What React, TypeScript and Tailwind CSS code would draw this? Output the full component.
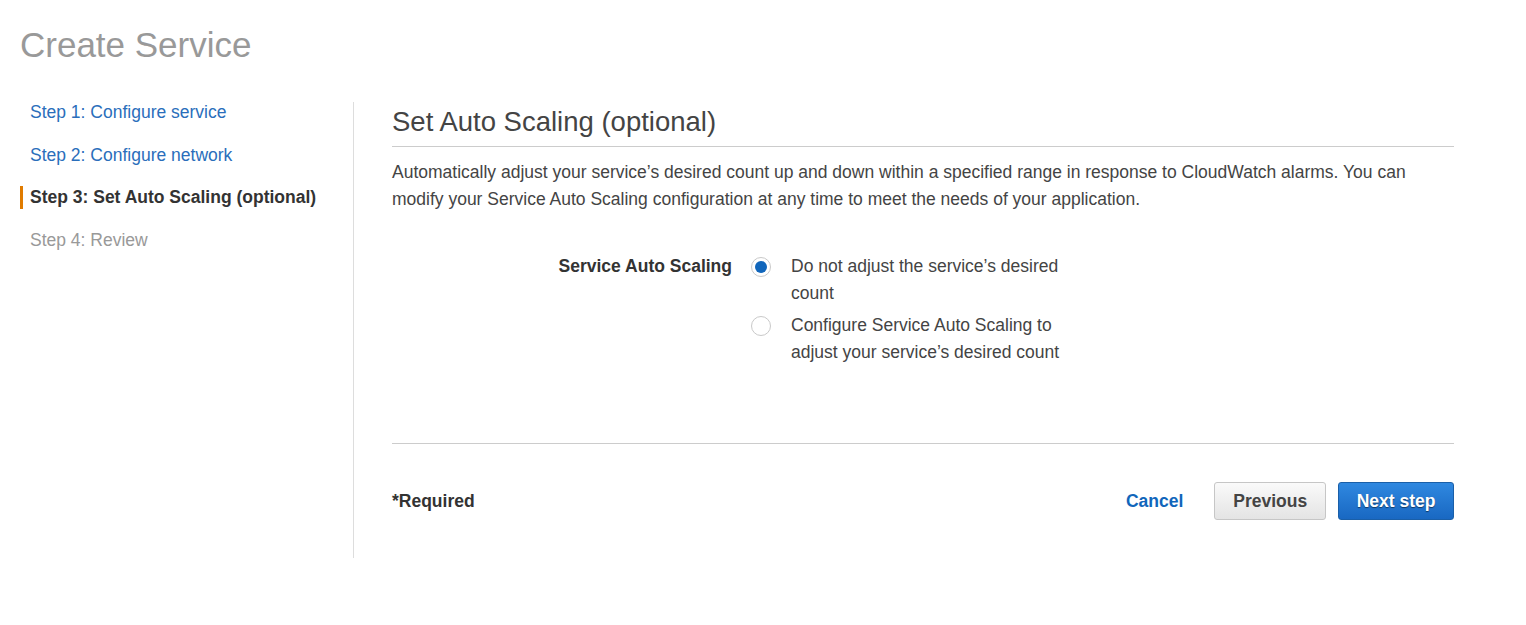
import React from "react";

function Radio({ checked }: { checked: boolean }) {
  return (
    <span className="mt-[3.5px] flex h-[20px] w-[20px] shrink-0 items-center justify-center rounded-full border border-[#c9c9c9] bg-white">
      {checked && <span className="h-[12px] w-[12px] rounded-full bg-[#1166bb]" />}
    </span>
  );
}

export default function App() {
  const font = { fontFamily: '"Liberation Sans", Arial, sans-serif' };
  return (
    <div className="min-h-[625px] bg-white pl-[20px] pr-[72px] pt-[26px] text-[17.5px] text-[#444]" style={font}>
      <h1 className="text-[35px] leading-[38px] text-[#999]">Create Service</h1>
      <div className="mt-[27px] flex">
        <nav className="flex w-[333px] shrink-0 flex-col">
          <div className="flex h-[42.6px] items-center pl-[10px] text-[#2a6ebb]">Step 1: Configure service</div>
          <div className="flex h-[42.6px] items-center pl-[10px] text-[#2a6ebb]">Step 2: Configure network</div>
          <div className="flex h-[42.6px] items-center">
            <span className="border-l-[3px] border-[#e07b00] pl-[7px] font-bold leading-[23px] text-[#333]">
              Step 3: Set Auto Scaling (optional)
            </span>
          </div>
          <div className="flex h-[42.6px] items-center pl-[10px] text-[#999]">Step 4: Review</div>
        </nav>
        <main className="mt-[11px] flex-1 border-l border-[#ddd] pl-[38px]">
          <h2 className="border-b border-[#ccc] pb-[4px] text-[27.5px] leading-[40px] text-[#444]">
            Set Auto Scaling (optional)
          </h2>
          <p className="mt-[12px] leading-[27px]">
            Automatically adjust your service’s desired count up and down within a specified range in response to CloudWatch alarms. You can modify your Service Auto Scaling configuration at any time to meet the needs of your application.
          </p>
          <div className="mt-[40px] flex">
            <div className="w-[340px] shrink-0 text-right font-bold leading-[27px] text-[#333]">Service Auto Scaling</div>
            <div className="ml-[19px] flex flex-col gap-[5px]">
              <label className="flex gap-[20px]">
                <Radio checked />
                <span className="w-[285px] leading-[27px]">Do not adjust the service’s desired count</span>
              </label>
              <label className="flex gap-[20px]">
                <Radio checked={false} />
                <span className="w-[285px] leading-[27px]">Configure Service Auto Scaling to adjust your service’s desired count</span>
              </label>
            </div>
          </div>
          <div className="mt-[77px] border-t border-[#ccc]" />
          <div className="flex items-center pb-[38px] pt-[38px]">
            <span className="font-bold text-[#333]">*Required</span>
            <div className="ml-auto flex items-center">
              <span className="mr-[31px] font-bold text-[#1166bb]">Cancel</span>
              <button className="h-[38px] rounded-[3px] border border-[#c6c6c6] bg-gradient-to-b from-[#fafafa] to-[#e4e4e4] px-[18px] font-bold text-[#444]">
                Previous
              </button>
              <button className="ml-[12px] h-[38px] rounded-[3px] border border-[#1a5fa8] bg-gradient-to-b from-[#2f88e0] to-[#1968c2] px-[17.5px] font-bold text-white [text-shadow:0_1px_1px_rgba(0,0,0,0.5)]">
                Next step
              </button>
            </div>
          </div>
        </main>
      </div>
    </div>
  );
}
